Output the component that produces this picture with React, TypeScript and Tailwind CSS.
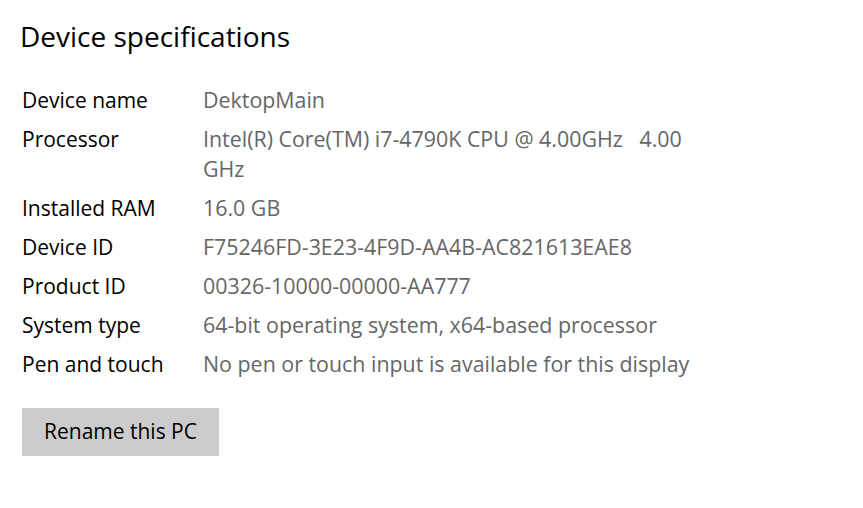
const specs: { label: string; value: string }[] = [
  { label: "Device name", value: "DektopMain" },
  { label: "Processor", value: "Intel(R) Core(TM) i7-4790K CPU @ 4.00GHz\u00a0\u00a0 4.00 GHz" },
  { label: "Installed RAM", value: "16.0 GB" },
  { label: "Device ID", value: "F75246FD-3E23-4F9D-AA4B-AC821613EAE8" },
  { label: "Product ID", value: "00326-10000-00000-AA777" },
  { label: "System type", value: "64-bit operating system, x64-based processor" },
  { label: "Pen and touch", value: "No pen or touch input is available for this display" },
];

export default function App() {
  return (
    <div className="min-h-screen bg-white font-['Open_Sans',sans-serif] text-black">
      <div className="pt-[14px] pl-[20px]">
        <h1 className="text-[28px] leading-[44px] font-normal">Device specifications</h1>

        <div className="mt-[27px] pl-[2px] flex flex-col gap-[9px]">
          {specs.map((s) => (
            <div key={s.label} className="flex leading-[30px]">
              <div className="w-[181px] shrink-0 text-[21px]">{s.label}</div>
              <div className="w-[500px] text-[21.4px] text-[#666666]">{s.value}</div>
            </div>
          ))}
        </div>

        <button className="mt-[29px] ml-[2px] h-[48px] w-[197px] bg-[#cccccc] text-[21px] text-black">
          Rename this PC
        </button>
      </div>
    </div>
  );
}
